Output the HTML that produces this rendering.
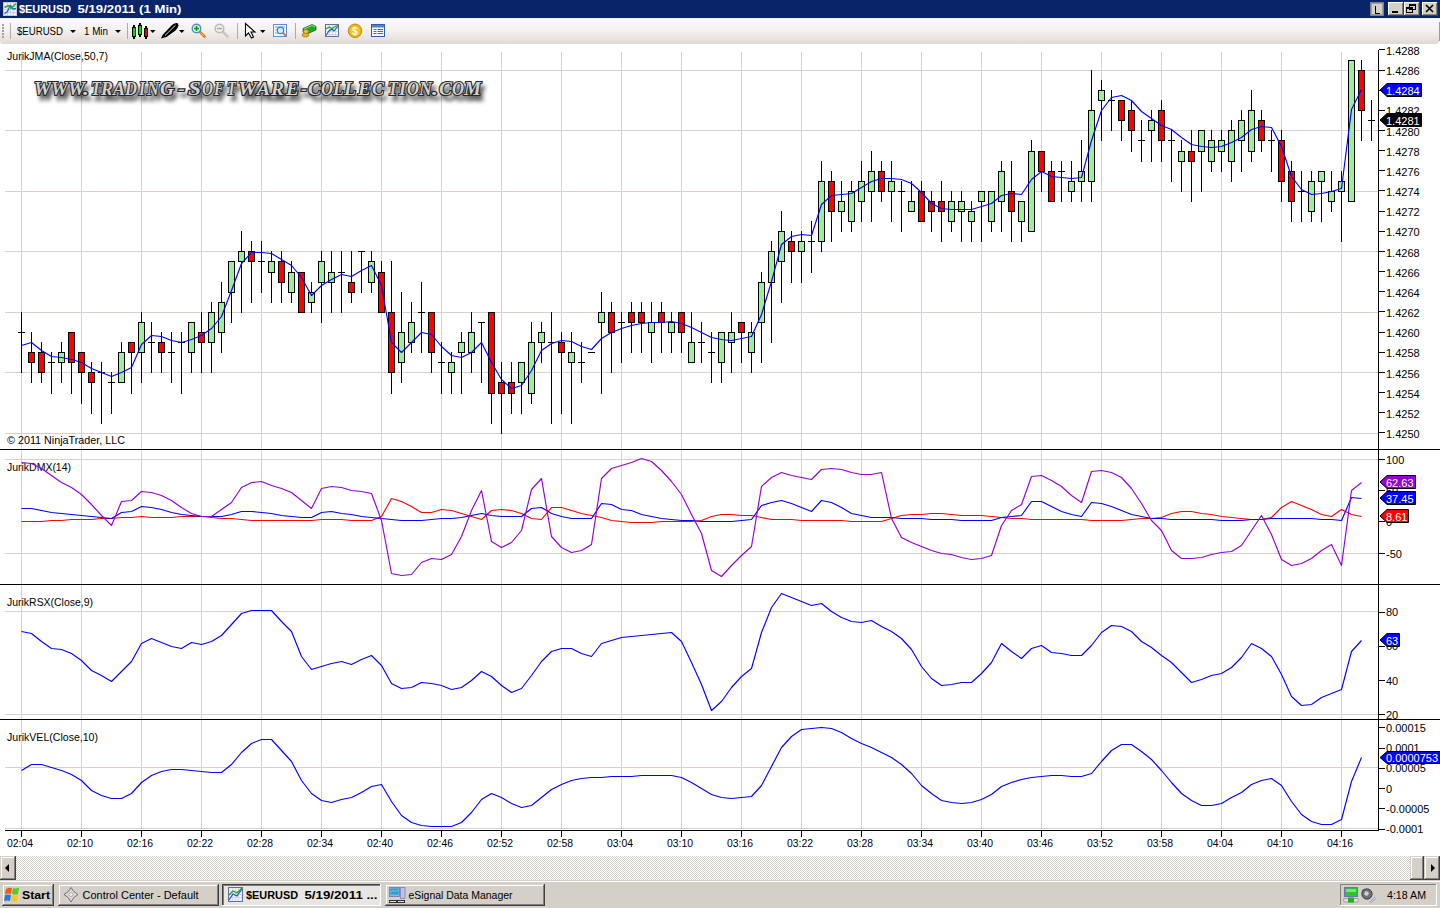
<!DOCTYPE html><html><head><meta charset="utf-8"><title>$EURUSD 5/19/2011 (1 Min)</title><style>
html,body{margin:0;padding:0;width:1440px;height:908px;overflow:hidden;background:#fff}
svg{display:block;font-family:"Liberation Sans",sans-serif}
.ax{font-size:11px;fill:#000}
</style></head><body>
<svg width="1440" height="908" viewBox="0 0 1440 908">
<defs><linearGradient id="tb" x1="0" y1="0" x2="0" y2="1"><stop offset="0" stop-color="#fcfafa"/><stop offset="0.45" stop-color="#f4f1ef"/><stop offset="1" stop-color="#e0dad6"/></linearGradient><pattern id="dots" width="2" height="2" patternUnits="userSpaceOnUse"><rect width="2" height="2" fill="#fff"/><rect width="1" height="1" fill="#d4d0c8"/><rect x="1" y="1" width="1" height="1" fill="#d4d0c8"/></pattern><filter id="blur" x="-5%" y="-50%" width="110%" height="200%"><feGaussianBlur stdDeviation="2"/></filter></defs>
<g shape-rendering="crispEdges">
<rect x="21" y="52" width="1" height="778" fill="#d8d0ca"/>
<rect x="81" y="52" width="1" height="778" fill="#d8d0ca"/>
<rect x="141" y="52" width="1" height="778" fill="#d8d0ca"/>
<rect x="201" y="52" width="1" height="778" fill="#d8d0ca"/>
<rect x="261" y="52" width="1" height="778" fill="#d8d0ca"/>
<rect x="321" y="52" width="1" height="778" fill="#d8d0ca"/>
<rect x="381" y="52" width="1" height="778" fill="#d8d0ca"/>
<rect x="441" y="52" width="1" height="778" fill="#d8d0ca"/>
<rect x="501" y="52" width="1" height="778" fill="#d8d0ca"/>
<rect x="561" y="52" width="1" height="778" fill="#d8d0ca"/>
<rect x="621" y="52" width="1" height="778" fill="#d8d0ca"/>
<rect x="681" y="52" width="1" height="778" fill="#d8d0ca"/>
<rect x="741" y="52" width="1" height="778" fill="#d8d0ca"/>
<rect x="801" y="52" width="1" height="778" fill="#d8d0ca"/>
<rect x="861" y="52" width="1" height="778" fill="#d8d0ca"/>
<rect x="921" y="52" width="1" height="778" fill="#d8d0ca"/>
<rect x="981" y="52" width="1" height="778" fill="#d8d0ca"/>
<rect x="1041" y="52" width="1" height="778" fill="#d8d0ca"/>
<rect x="1101" y="52" width="1" height="778" fill="#d8d0ca"/>
<rect x="1161" y="52" width="1" height="778" fill="#d8d0ca"/>
<rect x="1221" y="52" width="1" height="778" fill="#d8d0ca"/>
<rect x="1281" y="52" width="1" height="778" fill="#d8d0ca"/>
<rect x="1341" y="52" width="1" height="778" fill="#d8d0ca"/>
<rect x="5" y="70" width="1373" height="1" fill="#d8d0ca"/>
<rect x="5" y="130" width="1373" height="1" fill="#d8d0ca"/>
<rect x="5" y="191" width="1373" height="1" fill="#d8d0ca"/>
<rect x="5" y="251" width="1373" height="1" fill="#d8d0ca"/>
<rect x="5" y="312" width="1373" height="1" fill="#d8d0ca"/>
<rect x="5" y="372" width="1373" height="1" fill="#d8d0ca"/>
<rect x="5" y="433" width="1373" height="1" fill="#d8d0ca"/>
<rect x="5" y="459" width="1373" height="1" fill="#d8d0ca"/>
<rect x="5" y="553" width="1373" height="1" fill="#d8d0ca"/>
<rect x="5" y="611" width="1373" height="1" fill="#d8d0ca"/>
<rect x="5" y="714" width="1373" height="1" fill="#d8d0ca"/>
<rect x="5" y="767" width="1373" height="1" fill="#d8d0ca"/>
<rect x="5" y="828" width="1373" height="1" fill="#d8d0ca"/>
</g>
<text x="7" y="60" class="ax" textLength="101" lengthAdjust="spacingAndGlyphs">JurikJMA(Close,50,7)</text>
<text x="7" y="444" class="ax" textLength="118" lengthAdjust="spacingAndGlyphs">© 2011 NinjaTrader, LLC</text>
<text x="7" y="471" class="ax" textLength="64" lengthAdjust="spacingAndGlyphs">JurikDMX(14)</text>
<text x="7" y="606" class="ax" textLength="86" lengthAdjust="spacingAndGlyphs">JurikRSX(Close,9)</text>
<text x="7" y="741" class="ax" textLength="91" lengthAdjust="spacingAndGlyphs">JurikVEL(Close,10)</text>
<g style="font-family:'Liberation Serif',serif" font-weight="bold" font-style="italic" font-size="19" fill="#000" stroke="#000" stroke-width="2" opacity="0.65" filter="url(#blur)"><text x="37" y="100" textLength="17" lengthAdjust="spacingAndGlyphs">W</text><text x="54" y="100" textLength="17" lengthAdjust="spacingAndGlyphs">W</text><text x="71" y="100" textLength="17" lengthAdjust="spacingAndGlyphs">W</text><text x="86" y="100" textLength="6" lengthAdjust="spacingAndGlyphs">.</text><text x="94" y="100" textLength="10" lengthAdjust="spacingAndGlyphs">T</text><text x="104" y="100" textLength="12" lengthAdjust="spacingAndGlyphs">R</text><text x="116" y="100" textLength="12" lengthAdjust="spacingAndGlyphs">A</text><text x="128" y="100" textLength="12" lengthAdjust="spacingAndGlyphs">D</text><text x="142" y="100" textLength="6" lengthAdjust="spacingAndGlyphs">I</text><text x="150" y="100" textLength="12" lengthAdjust="spacingAndGlyphs">N</text><text x="163" y="100" textLength="14" lengthAdjust="spacingAndGlyphs">G</text><text x="181" y="100" textLength="7" lengthAdjust="spacingAndGlyphs">-</text><text x="191" y="100" textLength="13" lengthAdjust="spacingAndGlyphs">S</text><text x="205" y="100" textLength="11" lengthAdjust="spacingAndGlyphs">O</text><text x="217" y="100" textLength="10" lengthAdjust="spacingAndGlyphs">F</text><text x="230" y="100" textLength="9" lengthAdjust="spacingAndGlyphs">T</text><text x="241" y="100" textLength="19" lengthAdjust="spacingAndGlyphs">W</text><text x="260" y="100" textLength="13" lengthAdjust="spacingAndGlyphs">A</text><text x="274" y="100" textLength="13" lengthAdjust="spacingAndGlyphs">R</text><text x="289" y="100" textLength="13" lengthAdjust="spacingAndGlyphs">E</text><text x="304" y="100" textLength="6" lengthAdjust="spacingAndGlyphs">-</text><text x="311" y="100" textLength="13" lengthAdjust="spacingAndGlyphs">C</text><text x="324" y="100" textLength="12" lengthAdjust="spacingAndGlyphs">O</text><text x="336" y="100" textLength="11" lengthAdjust="spacingAndGlyphs">L</text><text x="347" y="100" textLength="12" lengthAdjust="spacingAndGlyphs">L</text><text x="361" y="100" textLength="13" lengthAdjust="spacingAndGlyphs">E</text><text x="375" y="100" textLength="12" lengthAdjust="spacingAndGlyphs">C</text><text x="391" y="100" textLength="10" lengthAdjust="spacingAndGlyphs">T</text><text x="402" y="100" textLength="7" lengthAdjust="spacingAndGlyphs">I</text><text x="410" y="100" textLength="12" lengthAdjust="spacingAndGlyphs">O</text><text x="422" y="100" textLength="13" lengthAdjust="spacingAndGlyphs">N</text><text x="435" y="100" textLength="6" lengthAdjust="spacingAndGlyphs">.</text><text x="442" y="100" textLength="13" lengthAdjust="spacingAndGlyphs">C</text><text x="455" y="100" textLength="12" lengthAdjust="spacingAndGlyphs">O</text><text x="467" y="100" textLength="17" lengthAdjust="spacingAndGlyphs">M</text></g>
<g style="font-family:'Liberation Serif',serif" font-weight="bold" font-style="italic" font-size="19" fill="#d2d2d2" stroke="#262626" stroke-width="2.2" paint-order="stroke"><text x="34" y="95" textLength="17" lengthAdjust="spacingAndGlyphs">W</text><text x="51" y="95" textLength="17" lengthAdjust="spacingAndGlyphs">W</text><text x="68" y="95" textLength="17" lengthAdjust="spacingAndGlyphs">W</text><text x="83" y="95" textLength="6" lengthAdjust="spacingAndGlyphs">.</text><text x="91" y="95" textLength="10" lengthAdjust="spacingAndGlyphs">T</text><text x="101" y="95" textLength="12" lengthAdjust="spacingAndGlyphs">R</text><text x="113" y="95" textLength="12" lengthAdjust="spacingAndGlyphs">A</text><text x="125" y="95" textLength="12" lengthAdjust="spacingAndGlyphs">D</text><text x="139" y="95" textLength="6" lengthAdjust="spacingAndGlyphs">I</text><text x="147" y="95" textLength="12" lengthAdjust="spacingAndGlyphs">N</text><text x="160" y="95" textLength="14" lengthAdjust="spacingAndGlyphs">G</text><text x="178" y="95" textLength="7" lengthAdjust="spacingAndGlyphs">-</text><text x="188" y="95" textLength="13" lengthAdjust="spacingAndGlyphs">S</text><text x="202" y="95" textLength="11" lengthAdjust="spacingAndGlyphs">O</text><text x="214" y="95" textLength="10" lengthAdjust="spacingAndGlyphs">F</text><text x="227" y="95" textLength="9" lengthAdjust="spacingAndGlyphs">T</text><text x="238" y="95" textLength="19" lengthAdjust="spacingAndGlyphs">W</text><text x="257" y="95" textLength="13" lengthAdjust="spacingAndGlyphs">A</text><text x="271" y="95" textLength="13" lengthAdjust="spacingAndGlyphs">R</text><text x="286" y="95" textLength="13" lengthAdjust="spacingAndGlyphs">E</text><text x="301" y="95" textLength="6" lengthAdjust="spacingAndGlyphs">-</text><text x="308" y="95" textLength="13" lengthAdjust="spacingAndGlyphs">C</text><text x="321" y="95" textLength="12" lengthAdjust="spacingAndGlyphs">O</text><text x="333" y="95" textLength="11" lengthAdjust="spacingAndGlyphs">L</text><text x="344" y="95" textLength="12" lengthAdjust="spacingAndGlyphs">L</text><text x="358" y="95" textLength="13" lengthAdjust="spacingAndGlyphs">E</text><text x="372" y="95" textLength="12" lengthAdjust="spacingAndGlyphs">C</text><text x="388" y="95" textLength="10" lengthAdjust="spacingAndGlyphs">T</text><text x="399" y="95" textLength="7" lengthAdjust="spacingAndGlyphs">I</text><text x="407" y="95" textLength="12" lengthAdjust="spacingAndGlyphs">O</text><text x="419" y="95" textLength="13" lengthAdjust="spacingAndGlyphs">N</text><text x="432" y="95" textLength="6" lengthAdjust="spacingAndGlyphs">.</text><text x="439" y="95" textLength="13" lengthAdjust="spacingAndGlyphs">C</text><text x="452" y="95" textLength="12" lengthAdjust="spacingAndGlyphs">O</text><text x="464" y="95" textLength="17" lengthAdjust="spacingAndGlyphs">M</text></g>
<g shape-rendering="crispEdges">
<rect x="21" y="312" width="1" height="61" fill="#000"/>
<rect x="18" y="332" width="7" height="1" fill="#000"/>
<rect x="31" y="332" width="1" height="51" fill="#000"/>
<rect x="28" y="352" width="7" height="11" fill="#000"/>
<rect x="29" y="353" width="5" height="9" fill="#ff0000"/>
<rect x="41" y="342" width="1" height="41" fill="#000"/>
<rect x="38" y="352" width="7" height="21" fill="#000"/>
<rect x="39" y="353" width="5" height="19" fill="#ff0000"/>
<rect x="51" y="352" width="1" height="42" fill="#000"/>
<rect x="48" y="362" width="7" height="1" fill="#000"/>
<rect x="61" y="342" width="1" height="41" fill="#000"/>
<rect x="58" y="352" width="7" height="11" fill="#000"/>
<rect x="59" y="353" width="5" height="9" fill="#98f098"/>
<rect x="71" y="332" width="1" height="62" fill="#000"/>
<rect x="68" y="332" width="7" height="31" fill="#000"/>
<rect x="69" y="333" width="5" height="29" fill="#ff0000"/>
<rect x="81" y="352" width="1" height="52" fill="#000"/>
<rect x="78" y="352" width="7" height="21" fill="#000"/>
<rect x="79" y="353" width="5" height="19" fill="#ff0000"/>
<rect x="91" y="362" width="1" height="52" fill="#000"/>
<rect x="88" y="372" width="7" height="11" fill="#000"/>
<rect x="89" y="373" width="5" height="9" fill="#ff0000"/>
<rect x="101" y="362" width="1" height="62" fill="#000"/>
<rect x="98" y="372" width="7" height="1" fill="#000"/>
<rect x="111" y="372" width="1" height="42" fill="#000"/>
<rect x="108" y="382" width="7" height="1" fill="#000"/>
<rect x="121" y="342" width="1" height="41" fill="#000"/>
<rect x="118" y="352" width="7" height="31" fill="#000"/>
<rect x="119" y="353" width="5" height="29" fill="#98f098"/>
<rect x="131" y="342" width="1" height="52" fill="#000"/>
<rect x="128" y="342" width="7" height="11" fill="#000"/>
<rect x="129" y="343" width="5" height="9" fill="#ff0000"/>
<rect x="141" y="312" width="1" height="71" fill="#000"/>
<rect x="138" y="322" width="7" height="31" fill="#000"/>
<rect x="139" y="323" width="5" height="29" fill="#98f098"/>
<rect x="151" y="322" width="1" height="51" fill="#000"/>
<rect x="148" y="342" width="7" height="1" fill="#000"/>
<rect x="161" y="332" width="1" height="41" fill="#000"/>
<rect x="158" y="342" width="7" height="11" fill="#000"/>
<rect x="159" y="343" width="5" height="9" fill="#ff0000"/>
<rect x="171" y="332" width="1" height="51" fill="#000"/>
<rect x="168" y="352" width="7" height="1" fill="#000"/>
<rect x="181" y="332" width="1" height="62" fill="#000"/>
<rect x="178" y="342" width="7" height="1" fill="#000"/>
<rect x="191" y="322" width="1" height="51" fill="#000"/>
<rect x="188" y="322" width="7" height="31" fill="#000"/>
<rect x="189" y="323" width="5" height="29" fill="#98f098"/>
<rect x="201" y="312" width="1" height="61" fill="#000"/>
<rect x="198" y="332" width="7" height="11" fill="#000"/>
<rect x="199" y="333" width="5" height="9" fill="#ff0000"/>
<rect x="211" y="302" width="1" height="71" fill="#000"/>
<rect x="208" y="312" width="7" height="31" fill="#000"/>
<rect x="209" y="313" width="5" height="29" fill="#98f098"/>
<rect x="221" y="282" width="1" height="71" fill="#000"/>
<rect x="218" y="302" width="7" height="31" fill="#000"/>
<rect x="219" y="303" width="5" height="29" fill="#98f098"/>
<rect x="231" y="261" width="1" height="62" fill="#000"/>
<rect x="228" y="261" width="7" height="32" fill="#000"/>
<rect x="229" y="262" width="5" height="30" fill="#98f098"/>
<rect x="241" y="231" width="1" height="82" fill="#000"/>
<rect x="238" y="251" width="7" height="11" fill="#000"/>
<rect x="239" y="252" width="5" height="9" fill="#98f098"/>
<rect x="251" y="241" width="1" height="62" fill="#000"/>
<rect x="248" y="251" width="7" height="11" fill="#000"/>
<rect x="249" y="252" width="5" height="9" fill="#ff0000"/>
<rect x="261" y="241" width="1" height="52" fill="#000"/>
<rect x="258" y="261" width="7" height="1" fill="#000"/>
<rect x="271" y="251" width="1" height="52" fill="#000"/>
<rect x="268" y="261" width="7" height="12" fill="#000"/>
<rect x="269" y="262" width="5" height="10" fill="#98f098"/>
<rect x="281" y="251" width="1" height="52" fill="#000"/>
<rect x="278" y="261" width="7" height="22" fill="#000"/>
<rect x="279" y="262" width="5" height="20" fill="#ff0000"/>
<rect x="291" y="261" width="1" height="42" fill="#000"/>
<rect x="288" y="272" width="7" height="21" fill="#000"/>
<rect x="289" y="273" width="5" height="19" fill="#98f098"/>
<rect x="301" y="272" width="1" height="41" fill="#000"/>
<rect x="298" y="272" width="7" height="41" fill="#000"/>
<rect x="299" y="273" width="5" height="39" fill="#ff0000"/>
<rect x="311" y="282" width="1" height="31" fill="#000"/>
<rect x="308" y="292" width="7" height="11" fill="#000"/>
<rect x="309" y="293" width="5" height="9" fill="#98f098"/>
<rect x="321" y="251" width="1" height="72" fill="#000"/>
<rect x="318" y="261" width="7" height="22" fill="#000"/>
<rect x="319" y="262" width="5" height="20" fill="#98f098"/>
<rect x="331" y="251" width="1" height="62" fill="#000"/>
<rect x="328" y="272" width="7" height="11" fill="#000"/>
<rect x="329" y="273" width="5" height="9" fill="#98f098"/>
<rect x="341" y="251" width="1" height="62" fill="#000"/>
<rect x="338" y="272" width="7" height="1" fill="#000"/>
<rect x="351" y="251" width="1" height="52" fill="#000"/>
<rect x="348" y="282" width="7" height="11" fill="#000"/>
<rect x="349" y="283" width="5" height="9" fill="#ff0000"/>
<rect x="361" y="251" width="1" height="42" fill="#000"/>
<rect x="358" y="251" width="7" height="1" fill="#000"/>
<rect x="371" y="251" width="1" height="42" fill="#000"/>
<rect x="368" y="261" width="7" height="22" fill="#000"/>
<rect x="369" y="262" width="5" height="20" fill="#98f098"/>
<rect x="381" y="261" width="1" height="52" fill="#000"/>
<rect x="378" y="272" width="7" height="41" fill="#000"/>
<rect x="379" y="273" width="5" height="39" fill="#ff0000"/>
<rect x="391" y="261" width="1" height="133" fill="#000"/>
<rect x="388" y="312" width="7" height="61" fill="#000"/>
<rect x="389" y="313" width="5" height="59" fill="#ff0000"/>
<rect x="401" y="292" width="1" height="91" fill="#000"/>
<rect x="398" y="332" width="7" height="31" fill="#000"/>
<rect x="399" y="333" width="5" height="29" fill="#98f098"/>
<rect x="411" y="302" width="1" height="51" fill="#000"/>
<rect x="408" y="322" width="7" height="21" fill="#000"/>
<rect x="409" y="323" width="5" height="19" fill="#98f098"/>
<rect x="421" y="282" width="1" height="71" fill="#000"/>
<rect x="418" y="312" width="7" height="1" fill="#000"/>
<rect x="431" y="312" width="1" height="61" fill="#000"/>
<rect x="428" y="312" width="7" height="41" fill="#000"/>
<rect x="429" y="313" width="5" height="39" fill="#ff0000"/>
<rect x="441" y="342" width="1" height="52" fill="#000"/>
<rect x="438" y="362" width="7" height="1" fill="#000"/>
<rect x="451" y="352" width="1" height="42" fill="#000"/>
<rect x="448" y="362" width="7" height="11" fill="#000"/>
<rect x="449" y="363" width="5" height="9" fill="#98f098"/>
<rect x="461" y="332" width="1" height="62" fill="#000"/>
<rect x="458" y="342" width="7" height="11" fill="#000"/>
<rect x="459" y="343" width="5" height="9" fill="#98f098"/>
<rect x="471" y="312" width="1" height="61" fill="#000"/>
<rect x="468" y="332" width="7" height="21" fill="#000"/>
<rect x="469" y="333" width="5" height="19" fill="#98f098"/>
<rect x="481" y="322" width="1" height="61" fill="#000"/>
<rect x="478" y="322" width="7" height="1" fill="#000"/>
<rect x="491" y="312" width="1" height="112" fill="#000"/>
<rect x="488" y="312" width="7" height="82" fill="#000"/>
<rect x="489" y="313" width="5" height="80" fill="#ff0000"/>
<rect x="501" y="362" width="1" height="72" fill="#000"/>
<rect x="498" y="382" width="7" height="12" fill="#000"/>
<rect x="499" y="383" width="5" height="10" fill="#ff0000"/>
<rect x="511" y="362" width="1" height="52" fill="#000"/>
<rect x="508" y="382" width="7" height="12" fill="#000"/>
<rect x="509" y="383" width="5" height="10" fill="#ff0000"/>
<rect x="521" y="362" width="1" height="52" fill="#000"/>
<rect x="518" y="362" width="7" height="21" fill="#000"/>
<rect x="519" y="363" width="5" height="19" fill="#98f098"/>
<rect x="531" y="322" width="1" height="82" fill="#000"/>
<rect x="528" y="342" width="7" height="52" fill="#000"/>
<rect x="529" y="343" width="5" height="50" fill="#98f098"/>
<rect x="541" y="322" width="1" height="41" fill="#000"/>
<rect x="538" y="332" width="7" height="11" fill="#000"/>
<rect x="539" y="333" width="5" height="9" fill="#98f098"/>
<rect x="551" y="312" width="1" height="112" fill="#000"/>
<rect x="548" y="342" width="7" height="1" fill="#000"/>
<rect x="561" y="332" width="1" height="82" fill="#000"/>
<rect x="558" y="342" width="7" height="11" fill="#000"/>
<rect x="559" y="343" width="5" height="9" fill="#ff0000"/>
<rect x="571" y="332" width="1" height="92" fill="#000"/>
<rect x="568" y="352" width="7" height="11" fill="#000"/>
<rect x="569" y="353" width="5" height="9" fill="#98f098"/>
<rect x="581" y="342" width="1" height="41" fill="#000"/>
<rect x="578" y="362" width="7" height="1" fill="#000"/>
<rect x="591" y="352" width="1" height="1" fill="#000"/>
<rect x="588" y="352" width="7" height="1" fill="#000"/>
<rect x="601" y="292" width="1" height="102" fill="#000"/>
<rect x="598" y="312" width="7" height="11" fill="#000"/>
<rect x="599" y="313" width="5" height="9" fill="#98f098"/>
<rect x="611" y="302" width="1" height="71" fill="#000"/>
<rect x="608" y="312" width="7" height="21" fill="#000"/>
<rect x="609" y="313" width="5" height="19" fill="#ff0000"/>
<rect x="621" y="312" width="1" height="51" fill="#000"/>
<rect x="618" y="322" width="7" height="1" fill="#000"/>
<rect x="631" y="302" width="1" height="51" fill="#000"/>
<rect x="628" y="312" width="7" height="11" fill="#000"/>
<rect x="629" y="313" width="5" height="9" fill="#ff0000"/>
<rect x="641" y="302" width="1" height="51" fill="#000"/>
<rect x="638" y="312" width="7" height="11" fill="#000"/>
<rect x="639" y="313" width="5" height="9" fill="#ff0000"/>
<rect x="651" y="302" width="1" height="61" fill="#000"/>
<rect x="648" y="322" width="7" height="11" fill="#000"/>
<rect x="649" y="323" width="5" height="9" fill="#98f098"/>
<rect x="661" y="302" width="1" height="51" fill="#000"/>
<rect x="658" y="312" width="7" height="11" fill="#000"/>
<rect x="659" y="313" width="5" height="9" fill="#ff0000"/>
<rect x="671" y="312" width="1" height="41" fill="#000"/>
<rect x="668" y="322" width="7" height="11" fill="#000"/>
<rect x="669" y="323" width="5" height="9" fill="#98f098"/>
<rect x="681" y="312" width="1" height="41" fill="#000"/>
<rect x="678" y="312" width="7" height="21" fill="#000"/>
<rect x="679" y="313" width="5" height="19" fill="#ff0000"/>
<rect x="691" y="312" width="1" height="51" fill="#000"/>
<rect x="688" y="342" width="7" height="21" fill="#000"/>
<rect x="689" y="343" width="5" height="19" fill="#98f098"/>
<rect x="701" y="322" width="1" height="41" fill="#000"/>
<rect x="698" y="342" width="7" height="1" fill="#000"/>
<rect x="711" y="332" width="1" height="51" fill="#000"/>
<rect x="708" y="352" width="7" height="1" fill="#000"/>
<rect x="721" y="332" width="1" height="51" fill="#000"/>
<rect x="718" y="332" width="7" height="31" fill="#000"/>
<rect x="719" y="333" width="5" height="29" fill="#98f098"/>
<rect x="731" y="312" width="1" height="61" fill="#000"/>
<rect x="728" y="332" width="7" height="11" fill="#000"/>
<rect x="729" y="333" width="5" height="9" fill="#98f098"/>
<rect x="741" y="322" width="1" height="41" fill="#000"/>
<rect x="738" y="322" width="7" height="11" fill="#000"/>
<rect x="739" y="323" width="5" height="9" fill="#ff0000"/>
<rect x="751" y="322" width="1" height="51" fill="#000"/>
<rect x="748" y="332" width="7" height="21" fill="#000"/>
<rect x="749" y="333" width="5" height="19" fill="#98f098"/>
<rect x="761" y="272" width="1" height="91" fill="#000"/>
<rect x="758" y="282" width="7" height="41" fill="#000"/>
<rect x="759" y="283" width="5" height="39" fill="#98f098"/>
<rect x="771" y="241" width="1" height="102" fill="#000"/>
<rect x="768" y="251" width="7" height="32" fill="#000"/>
<rect x="769" y="252" width="5" height="30" fill="#98f098"/>
<rect x="781" y="211" width="1" height="92" fill="#000"/>
<rect x="778" y="231" width="7" height="31" fill="#000"/>
<rect x="779" y="232" width="5" height="29" fill="#98f098"/>
<rect x="791" y="231" width="1" height="52" fill="#000"/>
<rect x="788" y="241" width="7" height="11" fill="#000"/>
<rect x="789" y="242" width="5" height="9" fill="#ff0000"/>
<rect x="801" y="231" width="1" height="52" fill="#000"/>
<rect x="798" y="241" width="7" height="11" fill="#000"/>
<rect x="799" y="242" width="5" height="9" fill="#98f098"/>
<rect x="811" y="221" width="1" height="52" fill="#000"/>
<rect x="808" y="241" width="7" height="1" fill="#000"/>
<rect x="821" y="161" width="1" height="91" fill="#000"/>
<rect x="818" y="181" width="7" height="61" fill="#000"/>
<rect x="819" y="182" width="5" height="59" fill="#98f098"/>
<rect x="831" y="171" width="1" height="71" fill="#000"/>
<rect x="828" y="181" width="7" height="31" fill="#000"/>
<rect x="829" y="182" width="5" height="29" fill="#ff0000"/>
<rect x="841" y="181" width="1" height="51" fill="#000"/>
<rect x="838" y="201" width="7" height="11" fill="#000"/>
<rect x="839" y="202" width="5" height="9" fill="#98f098"/>
<rect x="851" y="181" width="1" height="51" fill="#000"/>
<rect x="848" y="191" width="7" height="31" fill="#000"/>
<rect x="849" y="192" width="5" height="29" fill="#98f098"/>
<rect x="861" y="161" width="1" height="61" fill="#000"/>
<rect x="858" y="181" width="7" height="21" fill="#000"/>
<rect x="859" y="182" width="5" height="19" fill="#98f098"/>
<rect x="871" y="151" width="1" height="71" fill="#000"/>
<rect x="868" y="171" width="7" height="21" fill="#000"/>
<rect x="869" y="172" width="5" height="19" fill="#98f098"/>
<rect x="881" y="161" width="1" height="41" fill="#000"/>
<rect x="878" y="171" width="7" height="21" fill="#000"/>
<rect x="879" y="172" width="5" height="19" fill="#ff0000"/>
<rect x="891" y="161" width="1" height="61" fill="#000"/>
<rect x="888" y="181" width="7" height="11" fill="#000"/>
<rect x="889" y="182" width="5" height="9" fill="#98f098"/>
<rect x="901" y="181" width="1" height="51" fill="#000"/>
<rect x="898" y="191" width="7" height="1" fill="#000"/>
<rect x="911" y="181" width="1" height="31" fill="#000"/>
<rect x="908" y="201" width="7" height="11" fill="#000"/>
<rect x="909" y="202" width="5" height="9" fill="#98f098"/>
<rect x="921" y="181" width="1" height="41" fill="#000"/>
<rect x="918" y="191" width="7" height="31" fill="#000"/>
<rect x="919" y="192" width="5" height="29" fill="#ff0000"/>
<rect x="931" y="191" width="1" height="41" fill="#000"/>
<rect x="928" y="201" width="7" height="11" fill="#000"/>
<rect x="929" y="202" width="5" height="9" fill="#ff0000"/>
<rect x="941" y="181" width="1" height="61" fill="#000"/>
<rect x="938" y="201" width="7" height="11" fill="#000"/>
<rect x="939" y="202" width="5" height="9" fill="#ff0000"/>
<rect x="951" y="191" width="1" height="41" fill="#000"/>
<rect x="948" y="201" width="7" height="21" fill="#000"/>
<rect x="949" y="202" width="5" height="19" fill="#98f098"/>
<rect x="961" y="191" width="1" height="51" fill="#000"/>
<rect x="958" y="201" width="7" height="11" fill="#000"/>
<rect x="959" y="202" width="5" height="9" fill="#98f098"/>
<rect x="971" y="201" width="1" height="41" fill="#000"/>
<rect x="968" y="211" width="7" height="11" fill="#000"/>
<rect x="969" y="212" width="5" height="9" fill="#98f098"/>
<rect x="981" y="191" width="1" height="51" fill="#000"/>
<rect x="978" y="191" width="7" height="11" fill="#000"/>
<rect x="979" y="192" width="5" height="9" fill="#98f098"/>
<rect x="991" y="191" width="1" height="41" fill="#000"/>
<rect x="988" y="191" width="7" height="31" fill="#000"/>
<rect x="989" y="192" width="5" height="29" fill="#98f098"/>
<rect x="1001" y="161" width="1" height="71" fill="#000"/>
<rect x="998" y="171" width="7" height="31" fill="#000"/>
<rect x="999" y="172" width="5" height="29" fill="#98f098"/>
<rect x="1011" y="161" width="1" height="81" fill="#000"/>
<rect x="1008" y="191" width="7" height="21" fill="#000"/>
<rect x="1009" y="192" width="5" height="19" fill="#ff0000"/>
<rect x="1021" y="201" width="1" height="41" fill="#000"/>
<rect x="1018" y="201" width="7" height="21" fill="#000"/>
<rect x="1019" y="202" width="5" height="19" fill="#98f098"/>
<rect x="1031" y="140" width="1" height="92" fill="#000"/>
<rect x="1028" y="151" width="7" height="81" fill="#000"/>
<rect x="1029" y="152" width="5" height="79" fill="#98f098"/>
<rect x="1041" y="151" width="1" height="41" fill="#000"/>
<rect x="1038" y="151" width="7" height="21" fill="#000"/>
<rect x="1039" y="152" width="5" height="19" fill="#ff0000"/>
<rect x="1051" y="161" width="1" height="41" fill="#000"/>
<rect x="1048" y="171" width="7" height="31" fill="#000"/>
<rect x="1049" y="172" width="5" height="29" fill="#ff0000"/>
<rect x="1061" y="161" width="1" height="41" fill="#000"/>
<rect x="1058" y="171" width="7" height="1" fill="#000"/>
<rect x="1071" y="161" width="1" height="41" fill="#000"/>
<rect x="1068" y="181" width="7" height="11" fill="#000"/>
<rect x="1069" y="182" width="5" height="9" fill="#98f098"/>
<rect x="1081" y="140" width="1" height="62" fill="#000"/>
<rect x="1078" y="171" width="7" height="11" fill="#000"/>
<rect x="1079" y="172" width="5" height="9" fill="#98f098"/>
<rect x="1091" y="70" width="1" height="132" fill="#000"/>
<rect x="1088" y="110" width="7" height="72" fill="#000"/>
<rect x="1089" y="111" width="5" height="70" fill="#98f098"/>
<rect x="1101" y="80" width="1" height="61" fill="#000"/>
<rect x="1098" y="90" width="7" height="11" fill="#000"/>
<rect x="1099" y="91" width="5" height="9" fill="#98f098"/>
<rect x="1111" y="90" width="1" height="41" fill="#000"/>
<rect x="1108" y="100" width="7" height="1" fill="#000"/>
<rect x="1121" y="100" width="1" height="41" fill="#000"/>
<rect x="1118" y="100" width="7" height="21" fill="#000"/>
<rect x="1119" y="101" width="5" height="19" fill="#ff0000"/>
<rect x="1131" y="100" width="1" height="52" fill="#000"/>
<rect x="1128" y="110" width="7" height="21" fill="#000"/>
<rect x="1129" y="111" width="5" height="19" fill="#ff0000"/>
<rect x="1141" y="120" width="1" height="42" fill="#000"/>
<rect x="1138" y="140" width="7" height="1" fill="#000"/>
<rect x="1151" y="110" width="1" height="52" fill="#000"/>
<rect x="1148" y="120" width="7" height="11" fill="#000"/>
<rect x="1149" y="121" width="5" height="9" fill="#98f098"/>
<rect x="1161" y="100" width="1" height="62" fill="#000"/>
<rect x="1158" y="110" width="7" height="31" fill="#000"/>
<rect x="1159" y="111" width="5" height="29" fill="#ff0000"/>
<rect x="1171" y="130" width="1" height="52" fill="#000"/>
<rect x="1168" y="140" width="7" height="1" fill="#000"/>
<rect x="1181" y="140" width="1" height="52" fill="#000"/>
<rect x="1178" y="151" width="7" height="11" fill="#000"/>
<rect x="1179" y="152" width="5" height="9" fill="#98f098"/>
<rect x="1191" y="130" width="1" height="72" fill="#000"/>
<rect x="1188" y="151" width="7" height="11" fill="#000"/>
<rect x="1189" y="152" width="5" height="9" fill="#ff0000"/>
<rect x="1201" y="130" width="1" height="62" fill="#000"/>
<rect x="1198" y="130" width="7" height="22" fill="#000"/>
<rect x="1199" y="131" width="5" height="20" fill="#98f098"/>
<rect x="1211" y="130" width="1" height="42" fill="#000"/>
<rect x="1208" y="140" width="7" height="22" fill="#000"/>
<rect x="1209" y="141" width="5" height="20" fill="#98f098"/>
<rect x="1221" y="130" width="1" height="42" fill="#000"/>
<rect x="1218" y="140" width="7" height="12" fill="#000"/>
<rect x="1219" y="141" width="5" height="10" fill="#98f098"/>
<rect x="1231" y="120" width="1" height="62" fill="#000"/>
<rect x="1228" y="130" width="7" height="32" fill="#000"/>
<rect x="1229" y="131" width="5" height="30" fill="#98f098"/>
<rect x="1241" y="110" width="1" height="62" fill="#000"/>
<rect x="1238" y="120" width="7" height="21" fill="#000"/>
<rect x="1239" y="121" width="5" height="19" fill="#98f098"/>
<rect x="1251" y="90" width="1" height="72" fill="#000"/>
<rect x="1248" y="110" width="7" height="42" fill="#000"/>
<rect x="1249" y="111" width="5" height="40" fill="#98f098"/>
<rect x="1261" y="110" width="1" height="42" fill="#000"/>
<rect x="1258" y="120" width="7" height="21" fill="#000"/>
<rect x="1259" y="121" width="5" height="19" fill="#ff0000"/>
<rect x="1271" y="130" width="1" height="42" fill="#000"/>
<rect x="1268" y="140" width="7" height="1" fill="#000"/>
<rect x="1281" y="130" width="1" height="72" fill="#000"/>
<rect x="1278" y="140" width="7" height="42" fill="#000"/>
<rect x="1279" y="141" width="5" height="40" fill="#ff0000"/>
<rect x="1291" y="161" width="1" height="61" fill="#000"/>
<rect x="1288" y="171" width="7" height="31" fill="#000"/>
<rect x="1289" y="172" width="5" height="29" fill="#ff0000"/>
<rect x="1301" y="171" width="1" height="51" fill="#000"/>
<rect x="1298" y="191" width="7" height="1" fill="#000"/>
<rect x="1311" y="171" width="1" height="51" fill="#000"/>
<rect x="1308" y="181" width="7" height="31" fill="#000"/>
<rect x="1309" y="182" width="5" height="29" fill="#98f098"/>
<rect x="1321" y="171" width="1" height="51" fill="#000"/>
<rect x="1318" y="171" width="7" height="11" fill="#000"/>
<rect x="1319" y="172" width="5" height="9" fill="#98f098"/>
<rect x="1331" y="171" width="1" height="41" fill="#000"/>
<rect x="1328" y="191" width="7" height="11" fill="#000"/>
<rect x="1329" y="192" width="5" height="9" fill="#98f098"/>
<rect x="1341" y="171" width="1" height="71" fill="#000"/>
<rect x="1338" y="181" width="7" height="11" fill="#000"/>
<rect x="1339" y="182" width="5" height="9" fill="#98f098"/>
<rect x="1351" y="60" width="1" height="142" fill="#000"/>
<rect x="1348" y="60" width="7" height="142" fill="#000"/>
<rect x="1349" y="61" width="5" height="140" fill="#98f098"/>
<rect x="1361" y="60" width="1" height="81" fill="#000"/>
<rect x="1358" y="70" width="7" height="41" fill="#000"/>
<rect x="1359" y="71" width="5" height="39" fill="#ff0000"/>
<rect x="1371" y="100" width="1" height="41" fill="#000"/>
<rect x="1368" y="120" width="7" height="1" fill="#000"/>
</g>
<polyline points="21.5,345.5 31.5,342.5 41.5,350.5 51.5,356.5 61.5,357.5 71.5,359.5 81.5,362.5 91.5,368.5 101.5,372.5 111.5,376.5 121.5,372.5 131.5,367.5 141.5,344.5 151.5,335.5 161.5,336.5 171.5,340.5 181.5,342.5 191.5,339.5 201.5,335.5 211.5,328.5 221.5,316.5 231.5,290.5 241.5,263.5 251.5,252.5 261.5,252.5 271.5,253.5 281.5,259.5 291.5,265.5 301.5,277.5 311.5,295.5 321.5,285.5 331.5,279.5 341.5,274.5 351.5,276.5 361.5,270.5 371.5,265.5 381.5,285.5 391.5,342.5 401.5,352.5 411.5,342.5 421.5,332.5 431.5,334.5 441.5,346.5 451.5,355.5 461.5,357.5 471.5,352.5 481.5,342.5 491.5,362.5 501.5,379.5 511.5,388.5 521.5,385.5 531.5,370.5 541.5,350.5 551.5,343.5 561.5,340.5 571.5,341.5 581.5,346.5 591.5,349.5 601.5,338.5 611.5,332.5 621.5,328.5 631.5,325.5 641.5,323.5 651.5,322.5 661.5,322.5 671.5,321.5 681.5,323.5 691.5,327.5 701.5,332.5 711.5,337.5 721.5,339.5 731.5,340.5 741.5,338.5 751.5,336.5 761.5,314.5 771.5,281.5 781.5,244.5 791.5,236.5 801.5,234.5 811.5,235.5 821.5,204.5 831.5,195.5 841.5,194.5 851.5,193.5 861.5,187.5 871.5,181.5 881.5,178.5 891.5,178.5 901.5,179.5 911.5,183.5 921.5,192.5 931.5,203.5 941.5,208.5 951.5,209.5 961.5,209.5 971.5,209.5 981.5,206.5 991.5,203.5 1001.5,195.5 1011.5,193.5 1021.5,194.5 1031.5,179.5 1041.5,171.5 1051.5,176.5 1061.5,177.5 1071.5,178.5 1081.5,177.5 1091.5,140.5 1101.5,110.5 1111.5,97.5 1121.5,95.5 1131.5,100.5 1141.5,111.5 1151.5,118.5 1161.5,125.5 1171.5,129.5 1181.5,137.5 1191.5,144.5 1201.5,146.5 1211.5,147.5 1221.5,146.5 1231.5,142.5 1241.5,137.5 1251.5,129.5 1261.5,126.5 1271.5,127.5 1281.5,146.5 1291.5,176.5 1301.5,189.5 1311.5,194.5 1321.5,193.5 1331.5,191.5 1341.5,188.5 1351.5,109.5 1361.5,89.5" fill="none" stroke="#0000ff" stroke-width="1.15" stroke-linejoin="round"/>
<polyline points="21.5,521.5 31.5,521.5 41.5,521.5 51.5,520.5 61.5,520.5 71.5,519.5 81.5,519.5 91.5,519.5 101.5,518.5 111.5,518.5 121.5,517.5 131.5,517.5 141.5,516.5 151.5,517.5 161.5,517.5 171.5,517.5 181.5,516.5 191.5,516.5 201.5,516.5 211.5,517.5 221.5,518.5 231.5,518.5 241.5,519.5 251.5,520.5 261.5,520.5 271.5,520.5 281.5,520.5 291.5,520.5 301.5,520.5 311.5,520.5 321.5,519.5 331.5,519.5 341.5,519.5 351.5,520.5 361.5,520.5 371.5,520.5 381.5,516.5 391.5,498.5 401.5,501.5 411.5,506.5 421.5,512.5 431.5,512.5 441.5,509.5 451.5,510.5 461.5,513.5 471.5,516.5 481.5,519.5 491.5,510.5 501.5,509.5 511.5,510.5 521.5,513.5 531.5,518.5 541.5,519.5 551.5,507.5 561.5,507.5 571.5,510.5 581.5,513.5 591.5,515.5 601.5,517.5 611.5,520.5 621.5,521.5 631.5,522.5 641.5,522.5 651.5,522.5 661.5,521.5 671.5,521.5 681.5,521.5 691.5,521.5 701.5,520.5 711.5,516.5 721.5,514.5 731.5,514.5 741.5,515.5 751.5,515.5 761.5,517.5 771.5,519.5 781.5,519.5 791.5,519.5 801.5,520.5 811.5,520.5 821.5,520.5 831.5,520.5 841.5,520.5 851.5,521.5 861.5,521.5 871.5,521.5 881.5,521.5 891.5,518.5 901.5,515.5 911.5,514.5 921.5,514.5 931.5,513.5 941.5,513.5 951.5,514.5 961.5,515.5 971.5,515.5 981.5,515.5 991.5,516.5 1001.5,517.5 1011.5,518.5 1021.5,518.5 1031.5,519.5 1041.5,519.5 1051.5,519.5 1061.5,519.5 1071.5,519.5 1081.5,519.5 1091.5,520.5 1101.5,520.5 1111.5,520.5 1121.5,520.5 1131.5,519.5 1141.5,518.5 1151.5,518.5 1161.5,517.5 1171.5,513.5 1181.5,511.5 1191.5,511.5 1201.5,513.5 1211.5,514.5 1221.5,516.5 1231.5,517.5 1241.5,518.5 1251.5,519.5 1261.5,519.5 1271.5,517.5 1281.5,507.5 1291.5,501.5 1301.5,505.5 1311.5,509.5 1321.5,514.5 1331.5,516.5 1341.5,509.5 1351.5,514.5 1361.5,516.5" fill="none" stroke="#ff0000" stroke-width="1.15" stroke-linejoin="round"/>
<polyline points="21.5,508.5 31.5,508.5 41.5,510.5 51.5,512.5 61.5,513.5 71.5,514.5 81.5,515.5 91.5,516.5 101.5,517.5 111.5,518.5 121.5,512.5 131.5,511.5 141.5,506.5 151.5,507.5 161.5,509.5 171.5,512.5 181.5,514.5 191.5,515.5 201.5,516.5 211.5,516.5 221.5,516.5 231.5,514.5 241.5,511.5 251.5,511.5 261.5,512.5 271.5,513.5 281.5,515.5 291.5,516.5 301.5,517.5 311.5,517.5 321.5,512.5 331.5,511.5 341.5,513.5 351.5,514.5 361.5,516.5 371.5,517.5 381.5,518.5 391.5,519.5 401.5,520.5 411.5,520.5 421.5,520.5 431.5,519.5 441.5,518.5 451.5,518.5 461.5,517.5 471.5,515.5 481.5,513.5 491.5,515.5 501.5,516.5 511.5,516.5 521.5,516.5 531.5,508.5 541.5,507.5 551.5,513.5 561.5,516.5 571.5,518.5 581.5,518.5 591.5,518.5 601.5,503.5 611.5,504.5 621.5,509.5 631.5,510.5 641.5,514.5 651.5,516.5 661.5,518.5 671.5,519.5 681.5,520.5 691.5,520.5 701.5,521.5 711.5,521.5 721.5,521.5 731.5,521.5 741.5,520.5 751.5,519.5 761.5,505.5 771.5,502.5 781.5,500.5 791.5,503.5 801.5,507.5 811.5,511.5 821.5,500.5 831.5,502.5 841.5,507.5 851.5,513.5 861.5,515.5 871.5,517.5 881.5,517.5 891.5,517.5 901.5,518.5 911.5,518.5 921.5,518.5 931.5,519.5 941.5,519.5 951.5,519.5 961.5,520.5 971.5,520.5 981.5,520.5 991.5,520.5 1001.5,517.5 1011.5,516.5 1021.5,515.5 1031.5,501.5 1041.5,501.5 1051.5,506.5 1061.5,511.5 1071.5,514.5 1081.5,516.5 1091.5,502.5 1101.5,503.5 1111.5,506.5 1121.5,510.5 1131.5,514.5 1141.5,516.5 1151.5,518.5 1161.5,518.5 1171.5,519.5 1181.5,519.5 1191.5,519.5 1201.5,519.5 1211.5,519.5 1221.5,520.5 1231.5,520.5 1241.5,520.5 1251.5,519.5 1261.5,519.5 1271.5,518.5 1281.5,518.5 1291.5,518.5 1301.5,518.5 1311.5,518.5 1321.5,519.5 1331.5,519.5 1341.5,520.5 1351.5,497.5 1361.5,498.5" fill="none" stroke="#0000ff" stroke-width="1.15" stroke-linejoin="round"/>
<polyline points="21.5,462.5 31.5,463.5 41.5,468.5 51.5,475.5 61.5,482.5 71.5,487.5 81.5,494.5 91.5,504.5 101.5,515.5 111.5,525.5 121.5,501.5 131.5,500.5 141.5,491.5 151.5,492.5 161.5,495.5 171.5,500.5 181.5,507.5 191.5,513.5 201.5,516.5 211.5,516.5 221.5,509.5 231.5,502.5 241.5,487.5 251.5,482.5 261.5,481.5 271.5,485.5 281.5,488.5 291.5,492.5 301.5,500.5 311.5,508.5 321.5,488.5 331.5,486.5 341.5,487.5 351.5,490.5 361.5,491.5 371.5,493.5 381.5,520.5 391.5,573.5 401.5,575.5 411.5,574.5 421.5,562.5 431.5,558.5 441.5,559.5 451.5,554.5 461.5,536.5 471.5,510.5 481.5,490.5 491.5,541.5 501.5,547.5 511.5,542.5 521.5,530.5 531.5,489.5 541.5,478.5 551.5,536.5 561.5,547.5 571.5,552.5 581.5,550.5 591.5,544.5 601.5,478.5 611.5,468.5 621.5,465.5 631.5,462.5 641.5,458.5 651.5,461.5 661.5,470.5 671.5,481.5 681.5,494.5 691.5,514.5 701.5,533.5 711.5,570.5 721.5,576.5 731.5,565.5 741.5,555.5 751.5,546.5 761.5,486.5 771.5,477.5 781.5,472.5 791.5,475.5 801.5,477.5 811.5,479.5 821.5,469.5 831.5,468.5 841.5,469.5 851.5,472.5 861.5,474.5 871.5,474.5 881.5,472.5 891.5,518.5 901.5,537.5 911.5,542.5 921.5,546.5 931.5,550.5 941.5,553.5 951.5,554.5 961.5,557.5 971.5,559.5 981.5,558.5 991.5,555.5 1001.5,525.5 1011.5,510.5 1021.5,504.5 1031.5,476.5 1041.5,475.5 1051.5,480.5 1061.5,486.5 1071.5,495.5 1081.5,502.5 1091.5,471.5 1101.5,470.5 1111.5,472.5 1121.5,477.5 1131.5,488.5 1141.5,503.5 1151.5,520.5 1161.5,530.5 1171.5,550.5 1181.5,558.5 1191.5,558.5 1201.5,557.5 1211.5,554.5 1221.5,552.5 1231.5,551.5 1241.5,545.5 1251.5,530.5 1261.5,515.5 1271.5,534.5 1281.5,559.5 1291.5,565.5 1301.5,563.5 1311.5,558.5 1321.5,550.5 1331.5,544.5 1341.5,565.5 1351.5,490.5 1361.5,482.5" fill="none" stroke="#9400d3" stroke-width="1.15" stroke-linejoin="round"/>
<polyline points="21.5,631.5 31.5,633.5 41.5,641.5 51.5,648.5 61.5,649.5 71.5,653.5 81.5,660.5 91.5,670.5 101.5,675.5 111.5,681.5 121.5,671.5 131.5,661.5 141.5,643.5 151.5,638.5 161.5,642.5 171.5,646.5 181.5,648.5 191.5,642.5 201.5,644.5 211.5,641.5 221.5,635.5 231.5,624.5 241.5,613.5 251.5,610.5 261.5,610.5 271.5,610.5 281.5,621.5 291.5,631.5 301.5,656.5 311.5,669.5 321.5,666.5 331.5,663.5 341.5,661.5 351.5,664.5 361.5,659.5 371.5,655.5 381.5,665.5 391.5,683.5 401.5,688.5 411.5,687.5 421.5,682.5 431.5,683.5 441.5,685.5 451.5,689.5 461.5,687.5 471.5,680.5 481.5,671.5 491.5,676.5 501.5,685.5 511.5,692.5 521.5,688.5 531.5,675.5 541.5,661.5 551.5,651.5 561.5,648.5 571.5,648.5 581.5,653.5 591.5,656.5 601.5,643.5 611.5,640.5 621.5,637.5 631.5,636.5 641.5,635.5 651.5,634.5 661.5,633.5 671.5,632.5 681.5,641.5 691.5,662.5 701.5,684.5 711.5,710.5 721.5,701.5 731.5,687.5 741.5,676.5 751.5,668.5 761.5,632.5 771.5,607.5 781.5,593.5 791.5,597.5 801.5,601.5 811.5,605.5 821.5,603.5 831.5,611.5 841.5,617.5 851.5,621.5 861.5,622.5 871.5,620.5 881.5,626.5 891.5,631.5 901.5,638.5 911.5,649.5 921.5,666.5 931.5,678.5 941.5,685.5 951.5,684.5 961.5,682.5 971.5,682.5 981.5,673.5 991.5,662.5 1001.5,643.5 1011.5,651.5 1021.5,658.5 1031.5,648.5 1041.5,645.5 1051.5,652.5 1061.5,653.5 1071.5,655.5 1081.5,655.5 1091.5,645.5 1101.5,632.5 1111.5,625.5 1121.5,626.5 1131.5,631.5 1141.5,641.5 1151.5,647.5 1161.5,655.5 1171.5,662.5 1181.5,672.5 1191.5,682.5 1201.5,679.5 1211.5,675.5 1221.5,673.5 1231.5,667.5 1241.5,657.5 1251.5,643.5 1261.5,648.5 1271.5,656.5 1281.5,674.5 1291.5,696.5 1301.5,705.5 1311.5,704.5 1321.5,697.5 1331.5,693.5 1341.5,689.5 1351.5,651.5 1361.5,640.5" fill="none" stroke="#0000ff" stroke-width="1.15" stroke-linejoin="round"/>
<polyline points="21.5,770.5 31.5,764.5 41.5,764.5 51.5,767.5 61.5,770.5 71.5,774.5 81.5,780.5 91.5,790.5 101.5,795.5 111.5,798.5 121.5,798.5 131.5,793.5 141.5,782.5 151.5,775.5 161.5,771.5 171.5,769.5 181.5,769.5 191.5,770.5 201.5,771.5 211.5,772.5 221.5,772.5 231.5,764.5 241.5,752.5 251.5,743.5 261.5,739.5 271.5,739.5 281.5,750.5 291.5,761.5 301.5,780.5 311.5,793.5 321.5,800.5 331.5,802.5 341.5,799.5 351.5,797.5 361.5,792.5 371.5,786.5 381.5,784.5 391.5,801.5 401.5,815.5 411.5,822.5 421.5,825.5 431.5,826.5 441.5,826.5 451.5,826.5 461.5,822.5 471.5,812.5 481.5,799.5 491.5,793.5 501.5,797.5 511.5,803.5 521.5,807.5 531.5,805.5 541.5,797.5 551.5,789.5 561.5,784.5 571.5,780.5 581.5,778.5 591.5,777.5 601.5,777.5 611.5,776.5 621.5,776.5 631.5,776.5 641.5,775.5 651.5,775.5 661.5,775.5 671.5,775.5 681.5,777.5 691.5,782.5 701.5,788.5 711.5,794.5 721.5,797.5 731.5,798.5 741.5,797.5 751.5,796.5 761.5,785.5 771.5,766.5 781.5,747.5 791.5,736.5 801.5,729.5 811.5,728.5 821.5,727.5 831.5,728.5 841.5,732.5 851.5,738.5 861.5,743.5 871.5,747.5 881.5,752.5 891.5,757.5 901.5,764.5 911.5,773.5 921.5,785.5 931.5,793.5 941.5,800.5 951.5,802.5 961.5,803.5 971.5,802.5 981.5,799.5 991.5,794.5 1001.5,786.5 1011.5,782.5 1021.5,779.5 1031.5,777.5 1041.5,776.5 1051.5,775.5 1061.5,775.5 1071.5,776.5 1081.5,776.5 1091.5,773.5 1101.5,761.5 1111.5,750.5 1121.5,744.5 1131.5,744.5 1141.5,751.5 1151.5,759.5 1161.5,770.5 1171.5,782.5 1181.5,793.5 1191.5,800.5 1201.5,805.5 1211.5,805.5 1221.5,803.5 1231.5,797.5 1241.5,792.5 1251.5,784.5 1261.5,780.5 1271.5,778.5 1281.5,785.5 1291.5,801.5 1301.5,814.5 1311.5,821.5 1321.5,824.5 1331.5,824.5 1341.5,819.5 1351.5,781.5 1361.5,757.5" fill="none" stroke="#0000ff" stroke-width="1.15" stroke-linejoin="round"/>
<g shape-rendering="crispEdges">
<rect x="0" y="449" width="1440" height="1" fill="#000"/>
<rect x="0" y="584" width="1440" height="1" fill="#000"/>
<rect x="0" y="719" width="1440" height="1" fill="#000"/>
<rect x="1378" y="50" width="1" height="781" fill="#000"/>
<rect x="5" y="830" width="1374" height="1" fill="#000"/>
<rect x="21" y="831" width="1" height="6" fill="#000"/>
<rect x="81" y="831" width="1" height="6" fill="#000"/>
<rect x="141" y="831" width="1" height="6" fill="#000"/>
<rect x="201" y="831" width="1" height="6" fill="#000"/>
<rect x="261" y="831" width="1" height="6" fill="#000"/>
<rect x="321" y="831" width="1" height="6" fill="#000"/>
<rect x="381" y="831" width="1" height="6" fill="#000"/>
<rect x="441" y="831" width="1" height="6" fill="#000"/>
<rect x="501" y="831" width="1" height="6" fill="#000"/>
<rect x="561" y="831" width="1" height="6" fill="#000"/>
<rect x="621" y="831" width="1" height="6" fill="#000"/>
<rect x="681" y="831" width="1" height="6" fill="#000"/>
<rect x="741" y="831" width="1" height="6" fill="#000"/>
<rect x="801" y="831" width="1" height="6" fill="#000"/>
<rect x="861" y="831" width="1" height="6" fill="#000"/>
<rect x="921" y="831" width="1" height="6" fill="#000"/>
<rect x="981" y="831" width="1" height="6" fill="#000"/>
<rect x="1041" y="831" width="1" height="6" fill="#000"/>
<rect x="1101" y="831" width="1" height="6" fill="#000"/>
<rect x="1161" y="831" width="1" height="6" fill="#000"/>
<rect x="1221" y="831" width="1" height="6" fill="#000"/>
<rect x="1281" y="831" width="1" height="6" fill="#000"/>
<rect x="1341" y="831" width="1" height="6" fill="#000"/>
</g>
<text x="7" y="847" class="ax" textLength="26" lengthAdjust="spacingAndGlyphs">02:04</text>
<text x="67" y="847" class="ax" textLength="26" lengthAdjust="spacingAndGlyphs">02:10</text>
<text x="127" y="847" class="ax" textLength="26" lengthAdjust="spacingAndGlyphs">02:16</text>
<text x="187" y="847" class="ax" textLength="26" lengthAdjust="spacingAndGlyphs">02:22</text>
<text x="247" y="847" class="ax" textLength="26" lengthAdjust="spacingAndGlyphs">02:28</text>
<text x="307" y="847" class="ax" textLength="26" lengthAdjust="spacingAndGlyphs">02:34</text>
<text x="367" y="847" class="ax" textLength="26" lengthAdjust="spacingAndGlyphs">02:40</text>
<text x="427" y="847" class="ax" textLength="26" lengthAdjust="spacingAndGlyphs">02:46</text>
<text x="487" y="847" class="ax" textLength="26" lengthAdjust="spacingAndGlyphs">02:52</text>
<text x="547" y="847" class="ax" textLength="26" lengthAdjust="spacingAndGlyphs">02:58</text>
<text x="607" y="847" class="ax" textLength="26" lengthAdjust="spacingAndGlyphs">03:04</text>
<text x="667" y="847" class="ax" textLength="26" lengthAdjust="spacingAndGlyphs">03:10</text>
<text x="727" y="847" class="ax" textLength="26" lengthAdjust="spacingAndGlyphs">03:16</text>
<text x="787" y="847" class="ax" textLength="26" lengthAdjust="spacingAndGlyphs">03:22</text>
<text x="847" y="847" class="ax" textLength="26" lengthAdjust="spacingAndGlyphs">03:28</text>
<text x="907" y="847" class="ax" textLength="26" lengthAdjust="spacingAndGlyphs">03:34</text>
<text x="967" y="847" class="ax" textLength="26" lengthAdjust="spacingAndGlyphs">03:40</text>
<text x="1027" y="847" class="ax" textLength="26" lengthAdjust="spacingAndGlyphs">03:46</text>
<text x="1087" y="847" class="ax" textLength="26" lengthAdjust="spacingAndGlyphs">03:52</text>
<text x="1147" y="847" class="ax" textLength="26" lengthAdjust="spacingAndGlyphs">03:58</text>
<text x="1207" y="847" class="ax" textLength="26" lengthAdjust="spacingAndGlyphs">04:04</text>
<text x="1267" y="847" class="ax" textLength="26" lengthAdjust="spacingAndGlyphs">04:10</text>
<text x="1327" y="847" class="ax" textLength="26" lengthAdjust="spacingAndGlyphs">04:16</text>
<rect x="1379" y="49" width="6" height="1" fill="#000" shape-rendering="crispEdges"/>
<text x="1386" y="54.8" class="ax">1.4288</text>
<rect x="1379" y="70" width="6" height="1" fill="#000" shape-rendering="crispEdges"/>
<text x="1386" y="75.0" class="ax">1.4286</text>
<rect x="1379" y="90" width="6" height="1" fill="#000" shape-rendering="crispEdges"/>
<text x="1386" y="95.2" class="ax">1.4284</text>
<rect x="1379" y="110" width="6" height="1" fill="#000" shape-rendering="crispEdges"/>
<text x="1386" y="115.3" class="ax">1.4282</text>
<rect x="1379" y="130" width="6" height="1" fill="#000" shape-rendering="crispEdges"/>
<text x="1386" y="135.5" class="ax">1.4280</text>
<rect x="1379" y="150" width="6" height="1" fill="#000" shape-rendering="crispEdges"/>
<text x="1386" y="155.7" class="ax">1.4278</text>
<rect x="1379" y="170" width="6" height="1" fill="#000" shape-rendering="crispEdges"/>
<text x="1386" y="175.8" class="ax">1.4276</text>
<rect x="1379" y="190" width="6" height="1" fill="#000" shape-rendering="crispEdges"/>
<text x="1386" y="196.0" class="ax">1.4274</text>
<rect x="1379" y="211" width="6" height="1" fill="#000" shape-rendering="crispEdges"/>
<text x="1386" y="216.2" class="ax">1.4272</text>
<rect x="1379" y="231" width="6" height="1" fill="#000" shape-rendering="crispEdges"/>
<text x="1386" y="236.3" class="ax">1.4270</text>
<rect x="1379" y="251" width="6" height="1" fill="#000" shape-rendering="crispEdges"/>
<text x="1386" y="256.5" class="ax">1.4268</text>
<rect x="1379" y="271" width="6" height="1" fill="#000" shape-rendering="crispEdges"/>
<text x="1386" y="276.7" class="ax">1.4266</text>
<rect x="1379" y="291" width="6" height="1" fill="#000" shape-rendering="crispEdges"/>
<text x="1386" y="296.8" class="ax">1.4264</text>
<rect x="1379" y="311" width="6" height="1" fill="#000" shape-rendering="crispEdges"/>
<text x="1386" y="317.0" class="ax">1.4262</text>
<rect x="1379" y="332" width="6" height="1" fill="#000" shape-rendering="crispEdges"/>
<text x="1386" y="337.2" class="ax">1.4260</text>
<rect x="1379" y="352" width="6" height="1" fill="#000" shape-rendering="crispEdges"/>
<text x="1386" y="357.3" class="ax">1.4258</text>
<rect x="1379" y="372" width="6" height="1" fill="#000" shape-rendering="crispEdges"/>
<text x="1386" y="377.5" class="ax">1.4256</text>
<rect x="1379" y="392" width="6" height="1" fill="#000" shape-rendering="crispEdges"/>
<text x="1386" y="397.7" class="ax">1.4254</text>
<rect x="1379" y="412" width="6" height="1" fill="#000" shape-rendering="crispEdges"/>
<text x="1386" y="417.8" class="ax">1.4252</text>
<rect x="1379" y="432" width="6" height="1" fill="#000" shape-rendering="crispEdges"/>
<text x="1386" y="438.0" class="ax">1.4250</text>
<rect x="1379" y="459" width="6" height="1" fill="#000" shape-rendering="crispEdges"/>
<text x="1386" y="463.5" class="ax">100</text>
<rect x="1379" y="490" width="6" height="1" fill="#000" shape-rendering="crispEdges"/>
<text x="1386" y="494.5" class="ax">50</text>
<rect x="1379" y="521" width="6" height="1" fill="#000" shape-rendering="crispEdges"/>
<text x="1386" y="525.5" class="ax">0</text>
<rect x="1379" y="553" width="6" height="1" fill="#000" shape-rendering="crispEdges"/>
<text x="1386" y="557.5" class="ax">-50</text>
<rect x="1379" y="612" width="6" height="1" fill="#000" shape-rendering="crispEdges"/>
<text x="1386" y="616.0" class="ax">80</text>
<rect x="1379" y="646" width="6" height="1" fill="#000" shape-rendering="crispEdges"/>
<text x="1386" y="650.4" class="ax">60</text>
<rect x="1379" y="680" width="6" height="1" fill="#000" shape-rendering="crispEdges"/>
<text x="1386" y="684.8" class="ax">40</text>
<rect x="1379" y="714" width="6" height="1" fill="#000" shape-rendering="crispEdges"/>
<text x="1386" y="718.6" class="ax">20</text>
<rect x="1379" y="727" width="6" height="1" fill="#000" shape-rendering="crispEdges"/>
<text x="1386" y="731.7" class="ax">0.00015</text>
<rect x="1379" y="748" width="6" height="1" fill="#000" shape-rendering="crispEdges"/>
<text x="1386" y="752.0" class="ax">0.0001</text>
<rect x="1379" y="768" width="6" height="1" fill="#000" shape-rendering="crispEdges"/>
<text x="1386" y="772.4" class="ax">0.00005</text>
<rect x="1379" y="788" width="6" height="1" fill="#000" shape-rendering="crispEdges"/>
<text x="1386" y="792.7" class="ax">0</text>
<rect x="1379" y="808" width="6" height="1" fill="#000" shape-rendering="crispEdges"/>
<text x="1386" y="812.8" class="ax">-0.00005</text>
<rect x="1379" y="829" width="6" height="1" fill="#000" shape-rendering="crispEdges"/>
<text x="1386" y="833.3" class="ax">-0.0001</text>
<path d="M1380,90.0 L1387,83.5 L1421.5,83.5 L1421.5,96.5 L1387,96.5 Z" fill="#0000ff" stroke="#000" stroke-width="1"/>
<text x="1386" y="94.5" class="ax" style="fill:#fff">1.4284</text>
<path d="M1380,120.0 L1387,113.5 L1421.5,113.5 L1421.5,126.5 L1387,126.5 Z" fill="#000000" stroke="#000" stroke-width="1"/>
<text x="1386" y="124.5" class="ax" style="fill:#fff">1.4281</text>
<path d="M1380,482.0 L1387,475.5 L1415.5,475.5 L1415.5,488.5 L1387,488.5 Z" fill="#9400d3" stroke="#000" stroke-width="1"/>
<text x="1386" y="486.5" class="ax" style="fill:#fff">62.63</text>
<path d="M1380,498.0 L1387,491.5 L1415.5,491.5 L1415.5,504.5 L1387,504.5 Z" fill="#0000ff" stroke="#000" stroke-width="1"/>
<text x="1386" y="502.5" class="ax" style="fill:#fff">37.45</text>
<path d="M1380,516.0 L1387,509.5 L1408.5,509.5 L1408.5,522.5 L1387,522.5 Z" fill="#ff0000" stroke="#000" stroke-width="1"/>
<text x="1386" y="520.5" class="ax" style="fill:#fff">8.61</text>
<path d="M1380,640.0 L1387,633.5 L1399.5,633.5 L1399.5,646.5 L1387,646.5 Z" fill="#0000ff" stroke="#000" stroke-width="1"/>
<text x="1386" y="644.5" class="ax" style="fill:#fff">63</text>
<path d="M1380,757.5 L1387,751.5 L1440,751.5 L1440,763.5 L1387,763.5 Z" fill="#0000ff" stroke="#000" stroke-width="1"/>
<text x="1386" y="762.0" class="ax" style="fill:#fff">0.0000753</text>
<rect x="0" y="0" width="1440" height="18" fill="#0a246a"/>
<g shape-rendering="crispEdges"><rect x="3" y="2" width="14" height="14" fill="#c8c8d8"/><rect x="4" y="3" width="12" height="12" fill="#f2f0fa"/><path d="M4,6.5h12M4,9.5h12M4,12.5h12M7.5,3v12M10.5,3v12M13.5,3v12" stroke="#d0d0e4" stroke-width="1"/></g><polyline points="4.5,13.5 7.5,11.5 9,8 10.5,5.5 13,9 16,8.5" fill="none" stroke="#1870e0" stroke-width="1.4"/><polyline points="4.5,7.5 7.5,6 9,5.5 11,8.5 16,3.5" fill="none" stroke="#20b010" stroke-width="1.4"/>
<text x="19" y="13" font-size="11" font-weight="bold" fill="#fff" textLength="52" lengthAdjust="spacingAndGlyphs">$EURUSD</text>
<text x="77.5" y="13" font-size="11" font-weight="bold" fill="#fff" textLength="104" lengthAdjust="spacingAndGlyphs">5/19/2011 (1 Min)</text>
<g shape-rendering="crispEdges"><rect x="1370" y="2" width="14" height="14" fill="#808080"/><rect x="1371" y="3" width="12" height="12" fill="#a0a0a0"/><rect x="1372" y="4" width="10" height="10" fill="#d4d0c8"/></g>
<path d="M1375.5,6 V13.5 H1380" stroke="#000" stroke-width="1" fill="none" shape-rendering="crispEdges"/>
<g shape-rendering="crispEdges"><rect x="1388" y="2" width="16" height="14" fill="#404040"/><rect x="1388" y="2" width="15" height="13" fill="#fff"/><rect x="1389" y="3" width="14" height="12" fill="#808080"/><rect x="1389" y="3" width="13" height="11" fill="#d4d0c8"/></g>
<rect x="1392" y="11" width="6" height="2" fill="#000"/>
<g shape-rendering="crispEdges"><rect x="1404" y="2" width="16" height="14" fill="#404040"/><rect x="1404" y="2" width="15" height="13" fill="#fff"/><rect x="1405" y="3" width="14" height="12" fill="#808080"/><rect x="1405" y="3" width="13" height="11" fill="#d4d0c8"/></g>
<path d="M1409.5,4.5h6v5h-6zM1406.5,7.5h6v5h-6z" fill="#d4d0c8" stroke="#000" stroke-width="1" shape-rendering="crispEdges"/><rect x="1409" y="4" width="7" height="2" fill="#000"/><rect x="1406" y="7" width="7" height="2" fill="#000"/>
<g shape-rendering="crispEdges"><rect x="1422" y="2" width="16" height="14" fill="#404040"/><rect x="1422" y="2" width="15" height="13" fill="#fff"/><rect x="1423" y="3" width="14" height="12" fill="#808080"/><rect x="1423" y="3" width="13" height="11" fill="#d4d0c8"/></g>
<path d="M1426,5 L1433,12 M1433,5 L1426,12" stroke="#000" stroke-width="1.6"/>
<rect x="0" y="18" width="1440" height="1" fill="#f2f0e8"/>
<path d="M0,19 H1436 Q1439,19 1439,22 V41 Q1439,44 1436,44 H3 Q0,44 0,41 Z" fill="url(#tb)"/>
<rect x="1439" y="22" width="1" height="19" fill="#9a9a9a"/>
<g fill="#a0a0a0" shape-rendering="crispEdges"><rect x="2" y="24" width="2" height="2"/><rect x="2" y="27" width="2" height="2"/><rect x="2" y="30" width="2" height="2"/><rect x="2" y="33" width="2" height="2"/><rect x="2" y="36" width="2" height="2"/></g>
<rect x="10" y="23" width="1" height="16" fill="#b0aca4" shape-rendering="crispEdges"/>
<rect x="127" y="23" width="1" height="16" fill="#b0aca4" shape-rendering="crispEdges"/>
<rect x="237" y="23" width="1" height="16" fill="#b0aca4" shape-rendering="crispEdges"/>
<rect x="295" y="23" width="1" height="16" fill="#b0aca4" shape-rendering="crispEdges"/>
<text x="17" y="35" font-size="11" fill="#000" textLength="46" lengthAdjust="spacingAndGlyphs">$EURUSD</text>
<path d="M70,30h6l-3,3z" fill="#000"/>
<text x="84" y="35" font-size="11" fill="#000" textLength="24" lengthAdjust="spacingAndGlyphs">1 Min</text>
<path d="M115,30h6l-3,3z" fill="#000"/>
<g shape-rendering="crispEdges"><rect x="133" y="25" width="2" height="14" fill="#000"/><rect x="132" y="27" width="4" height="10" fill="#000"/><rect x="133" y="28" width="2" height="8" fill="#00e000"/><rect x="139" y="23" width="2" height="14" fill="#000"/><rect x="138" y="25" width="4" height="10" fill="#000"/><rect x="139" y="26" width="2" height="8" fill="#00e000"/><rect x="145" y="26" width="2" height="13" fill="#000"/><rect x="144" y="28" width="4" height="9" fill="#000"/><rect x="145" y="29" width="2" height="7" fill="#e00000"/></g>
<path d="M150,30h5.5l-2.75,3z" fill="#000"/>
<path d="M161,38.5 L162.5,35 L172,25 Q175,22.5 177.5,23 L178.5,25.5 Q178,28 175.5,30.5 L166.5,37 Z" fill="#000"/><path d="M165,35.5 L175.5,25.2" stroke="#d8d8d8" stroke-width="1"/>
<path d="M179,30h5.5l-2.75,3z" fill="#000"/>
<path d="M199.5,31.5 L204.5,36.5" stroke="#e07820" stroke-width="2.6" stroke-linecap="round"/><path d="M200.5,32.5 L204,36" stroke="#f8c080" stroke-width="0.8"/>
<circle cx="196.5" cy="28.5" r="4.3" fill="#d8f0ff" stroke="#5090b8" stroke-width="1.4"/><path d="M194,28.5h5M196.5,26v5" stroke="#00a000" stroke-width="1.5"/>
<path d="M222.5,31.5 L227.5,36.5" stroke="#c8c8c8" stroke-width="2.6" stroke-linecap="round"/>
<circle cx="219.5" cy="28.5" r="4.3" fill="#eeeeee" stroke="#b8b8b8" stroke-width="1.4"/><path d="M217,28.5h5" stroke="#a8a8a8" stroke-width="1.5"/>
<path d="M245.5,23.5 L245.5,36 L248.5,33 L251.5,38 L253.5,37 L251,32 L255,32 Z" fill="#fff" stroke="#000" stroke-width="1.1"/>
<path d="M260,30h5.5l-2.75,3z" fill="#000"/>
<rect x="273.5" y="24.5" width="13" height="12" fill="#f0f6fc" stroke="#6090d0"/><rect x="275" y="26" width="10" height="2" fill="#b0c8e8"/><path d="M275,30h3M275,33h3" stroke="#90a8c8"/><circle cx="280.5" cy="30.5" r="3.2" fill="#c8ecff" stroke="#3a78b0" stroke-width="1.1"/><path d="M283,33 L286,36" stroke="#f07020" stroke-width="1.8"/>
<path d="M303,28.5 L312,24.5 L316,26.5 L316,30 L307,34 L303,32 Z" fill="#20a820" stroke="#106010" stroke-width="0.7"/><path d="M304,29 L312,25.5 L315,27" stroke="#a0f0a0" stroke-width="0.8" fill="none"/><ellipse cx="305.5" cy="35" rx="3.5" ry="2" fill="#e8b820" stroke="#a07010" stroke-width="0.7"/><ellipse cx="306" cy="31.5" rx="2.5" ry="2" fill="#f0c830" stroke="#a07010" stroke-width="0.7"/>
<rect x="325.5" y="24.5" width="13" height="12" fill="#f4f6fa" stroke="#6070a0"/><path d="M326,28.5h12M326,31.5h12M326,34.5h12M329.5,25v11M332.5,25v11M335.5,25v11" stroke="#c8d0e0" stroke-width="0.8"/><polyline points="326,35.5 329,31 332,29 334,31 338,26" fill="none" stroke="#2050d0" stroke-width="1.1"/><polyline points="326,29 329,27 332,28.5 335,26.5 338,25.5" fill="none" stroke="#20b020" stroke-width="1.1"/>
<circle cx="355" cy="30.8" r="6.8" fill="#e8b010" stroke="#b08000" stroke-width="0.8"/><circle cx="355" cy="30.8" r="5.2" fill="#f4c820"/><text x="352" y="34.8" font-size="10" font-weight="bold" fill="#fff8e0">$</text>
<rect x="371.5" y="24.5" width="13" height="12" fill="#f8faff" stroke="#3060a8"/><rect x="372" y="25" width="12" height="2.5" fill="#5080d0"/><path d="M373.5,29.5h3M377.5,29.5h5.5M373.5,31.5h3M377.5,31.5h5.5M373.5,33.5h3M377.5,33.5h5.5" stroke="#4868a8" stroke-width="1"/>
<g shape-rendering="crispEdges">
<rect x="0" y="856" width="1440" height="24" fill="url(#dots)"/>
<rect x="0" y="856" width="16" height="24" fill="#404040"/><rect x="0" y="856" width="15" height="23" fill="#d4d0c8"/><rect x="1" y="857" width="14" height="22" fill="#808080"/><rect x="1" y="857" width="13" height="21" fill="#fff"/><rect x="2" y="858" width="12" height="20" fill="#d4d0c8"/>
<rect x="1410" y="856" width="14" height="24" fill="#404040"/><rect x="1410" y="856" width="13" height="23" fill="#d4d0c8"/><rect x="1411" y="857" width="12" height="22" fill="#808080"/><rect x="1411" y="857" width="11" height="21" fill="#fff"/><rect x="1412" y="858" width="10" height="20" fill="#d4d0c8"/>
<rect x="1424" y="856" width="16" height="24" fill="#404040"/><rect x="1424" y="856" width="15" height="23" fill="#d4d0c8"/><rect x="1425" y="857" width="14" height="22" fill="#808080"/><rect x="1425" y="857" width="13" height="21" fill="#fff"/><rect x="1426" y="858" width="12" height="20" fill="#d4d0c8"/>
</g>
<path d="M5,868 L9,864 L9,872 Z" fill="#000"/>
<path d="M1435,868 L1431,864 L1431,872 Z" fill="#000"/>
<g shape-rendering="crispEdges">
<rect x="0" y="880" width="1440" height="28" fill="#d4d0c8"/>
<rect x="0" y="881" width="1440" height="1" fill="#fff"/>
<rect x="2" y="884" width="52" height="22" fill="#404040"/><rect x="2" y="884" width="51" height="21" fill="#d4d0c8"/><rect x="3" y="885" width="50" height="20" fill="#808080"/><rect x="3" y="885" width="49" height="19" fill="#fff"/><rect x="4" y="886" width="48" height="18" fill="#d4d0c8"/>
<rect x="58" y="884" width="161" height="22" fill="#404040"/><rect x="58" y="884" width="160" height="21" fill="#d4d0c8"/><rect x="59" y="885" width="159" height="20" fill="#808080"/><rect x="59" y="885" width="158" height="19" fill="#fff"/><rect x="60" y="886" width="157" height="18" fill="#d4d0c8"/>
<rect x="222" y="884" width="159" height="22" fill="#fff"/><rect x="222" y="884" width="158" height="21" fill="#404040"/><rect x="223" y="885" width="157" height="20" fill="#808080"/><rect x="224" y="886" width="156" height="19" fill="#e8e6e2"/>
<rect x="385" y="884" width="160" height="22" fill="#404040"/><rect x="385" y="884" width="159" height="21" fill="#d4d0c8"/><rect x="386" y="885" width="158" height="20" fill="#808080"/><rect x="386" y="885" width="157" height="19" fill="#fff"/><rect x="387" y="886" width="156" height="18" fill="#d4d0c8"/>
<rect x="1340" y="884" width="97" height="22" fill="#fff"/><rect x="1340" y="884" width="96" height="21" fill="#808080"/><rect x="1341" y="885" width="95" height="20" fill="#d4d0c8"/>
</g>
<path d="M6,889 Q9,887 12,888 L11,894 Q8,893 5,894 Z" fill="#f05a14"/><path d="M13,888 Q16,889 19,887.5 L18,894 Q15,895 12,894 Z" fill="#5ac81e"/><path d="M5,895 Q8,894 11,895 L10,901 Q7,900 4,901 Z" fill="#2a78e8"/><path d="M12,895 Q15,896 18,895 L17,901 Q14,902 11,901 Z" fill="#f8c818"/>
<text x="22" y="899" font-size="11" font-weight="bold" fill="#000" textLength="28" lengthAdjust="spacingAndGlyphs">Start</text>
<path d="M71,887.5 Q73,892 78,894.5 Q73,897 71,902 Q69,897 64,894.5 Q69,892 71,887.5 Z" fill="#d8d8dc" stroke="#6a6a6a" stroke-width="0.9"/><circle cx="71" cy="894.5" r="2" fill="#f0f0f0" stroke="#a0a0a0" stroke-width="0.8"/>
<text x="82.5" y="899" font-size="11" fill="#000" textLength="116" lengthAdjust="spacingAndGlyphs">Control Center - Default</text>
<rect x="228.5" y="887.5" width="14" height="14" fill="#eef0f6" stroke="#6070a0"/><path d="M229,891.5h13M229,894.5h13M229,897.5h13M232.5,888v13M235.5,888v13M238.5,888v13" stroke="#c8d0e0" stroke-width="0.7"/><polyline points="229,900 233,894 237,896 242,889" fill="none" stroke="#2050d0" stroke-width="1.2"/><polyline points="229,895 233,891 237,893 242,888" fill="none" stroke="#20a020" stroke-width="1.2"/>
<text x="246" y="899" font-size="11" font-weight="bold" fill="#000" textLength="52" lengthAdjust="spacingAndGlyphs">$EURUSD</text>
<text x="304.5" y="899" font-size="11" font-weight="bold" fill="#000" textLength="73" lengthAdjust="spacingAndGlyphs">5/19/2011 ...</text>
<rect x="389.5" y="887.5" width="10" height="9" fill="#a8a8e0" stroke="#8080c0"/><rect x="390.5" y="888.5" width="8" height="6" fill="#18a0f0"/><path d="M391,892 L393,890.5 L395,891.5 L398,890" stroke="#a0e020" fill="none"/><rect x="400.5" y="887.5" width="4.5" height="11" fill="#c0c0e8" stroke="#8080b0" stroke-width="0.8"/><rect x="389" y="900" width="16" height="3" fill="#303030"/><rect x="390" y="901" width="6" height="1" fill="#e0e0e0"/><rect x="398" y="901" width="6" height="1" fill="#e0e0e0"/>
<text x="408.5" y="899" font-size="11" fill="#000" textLength="104" lengthAdjust="spacingAndGlyphs">eSignal Data Manager</text>
<rect x="1344.5" y="887.5" width="13" height="9" fill="#30c030" stroke="#7070c0"/><rect x="1346" y="889" width="10" height="3" fill="#80e080"/><rect x="1343.5" y="898.5" width="15" height="3.5" rx="1.5" fill="#e0e0e0" stroke="#909090" stroke-width="0.8"/><rect x="1348" y="897.5" width="6" height="5" fill="#20b020"/>
<circle cx="1367" cy="894" r="5.2" fill="#707070" stroke="#303040" stroke-width="0.8"/><circle cx="1366.5" cy="893.5" r="2.2" fill="#d0d0d0"/><path d="M1362,892.5 Q1362,889.5 1364.5,889" stroke="#4040a0" fill="none" stroke-width="0.9"/><path d="M1369,902.5 L1375,897 M1370.5,903 L1376,898.5" stroke="#9090f0" fill="none" stroke-width="0.8"/>
<text x="1387" y="899" font-size="11" fill="#000" textLength="39" lengthAdjust="spacingAndGlyphs">4:18 AM</text>
</svg></body></html>
